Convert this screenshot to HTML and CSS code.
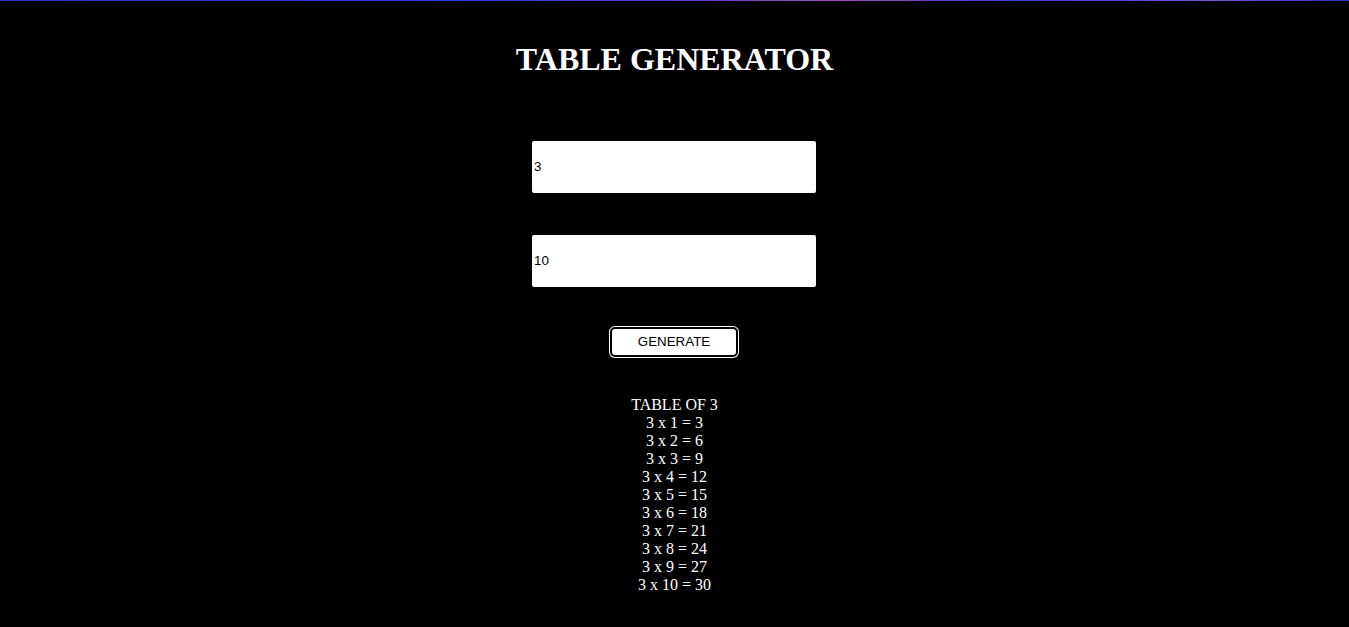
FILE: index.html
```html
<!DOCTYPE html>
<html>
<head>
<meta charset="utf-8">
<title>Table Generator</title>
<link rel="stylesheet" href="styles.css">
</head>
<body>
<div class="topline"></div>
<main class="page">
  <h1 class="title">TABLE GENERATOR</h1>
  <input class="field" type="text" value="3">
  <input class="field field-second" type="text" value="10">
  <button class="gen-btn" type="button">GENERATE</button>
  <div class="result">
    <div>TABLE OF 3</div>
    <div>3 x 1 = 3</div>
    <div>3 x 2 = 6</div>
    <div>3 x 3 = 9</div>
    <div>3 x 4 = 12</div>
    <div>3 x 5 = 15</div>
    <div>3 x 6 = 18</div>
    <div>3 x 7 = 21</div>
    <div>3 x 8 = 24</div>
    <div>3 x 9 = 27</div>
    <div>3 x 10 = 30</div>
  </div>
</main>
</body>
</html>
```

FILE: styles.css
```css
html, body {
  margin: 0;
  padding: 0;
  background: #000;
  height: 100%;
}
body {
  font-family: "Liberation Serif", "Times New Roman", serif;
  color: #fff;
}
.topline {
  height: 1px;
  background: linear-gradient(90deg, #2430c8 0%, #2a3ad8 35%, #5a3ad0 50%, #9a4ac8 62%, #3a3ad0 75%, #7a50d8 90%, #2a30c0 100%);
}
.page {
  display: flex;
  flex-direction: column;
  align-items: center;
}
.title {
  font-size: 32px;
  font-weight: bold;
  margin: 40px 0 0;
  line-height: 37px;
}
.field {
  margin-top: 63px;
  margin-right: 1px;
  width: 284px;
  height: 52px;
  box-sizing: border-box;
  border: none;
  border-radius: 2px;
  background: #fff;
  padding: 0 2px 2px;
  font-family: "Liberation Sans", Arial, sans-serif;
  font-size: 13.33px;
  color: #000;
  outline: none;
}
.field-second {
  margin-top: 42px;
}
.gen-btn {
  margin-top: 40px;
  margin-right: 1px;
  width: 128px;
  height: 30px;
  box-sizing: border-box;
  background: #fff;
  border: 2px solid #000;
  border-radius: 5px;
  box-shadow: 0 0 0 1px #fff;
  font-family: "Liberation Sans", Arial, sans-serif;
  font-size: 13.33px;
  color: #000;
  padding: 0 0 2px;
}
.result {
  margin-top: 39px;
  font-size: 16px;
  line-height: 18px;
  text-align: center;
}
```
